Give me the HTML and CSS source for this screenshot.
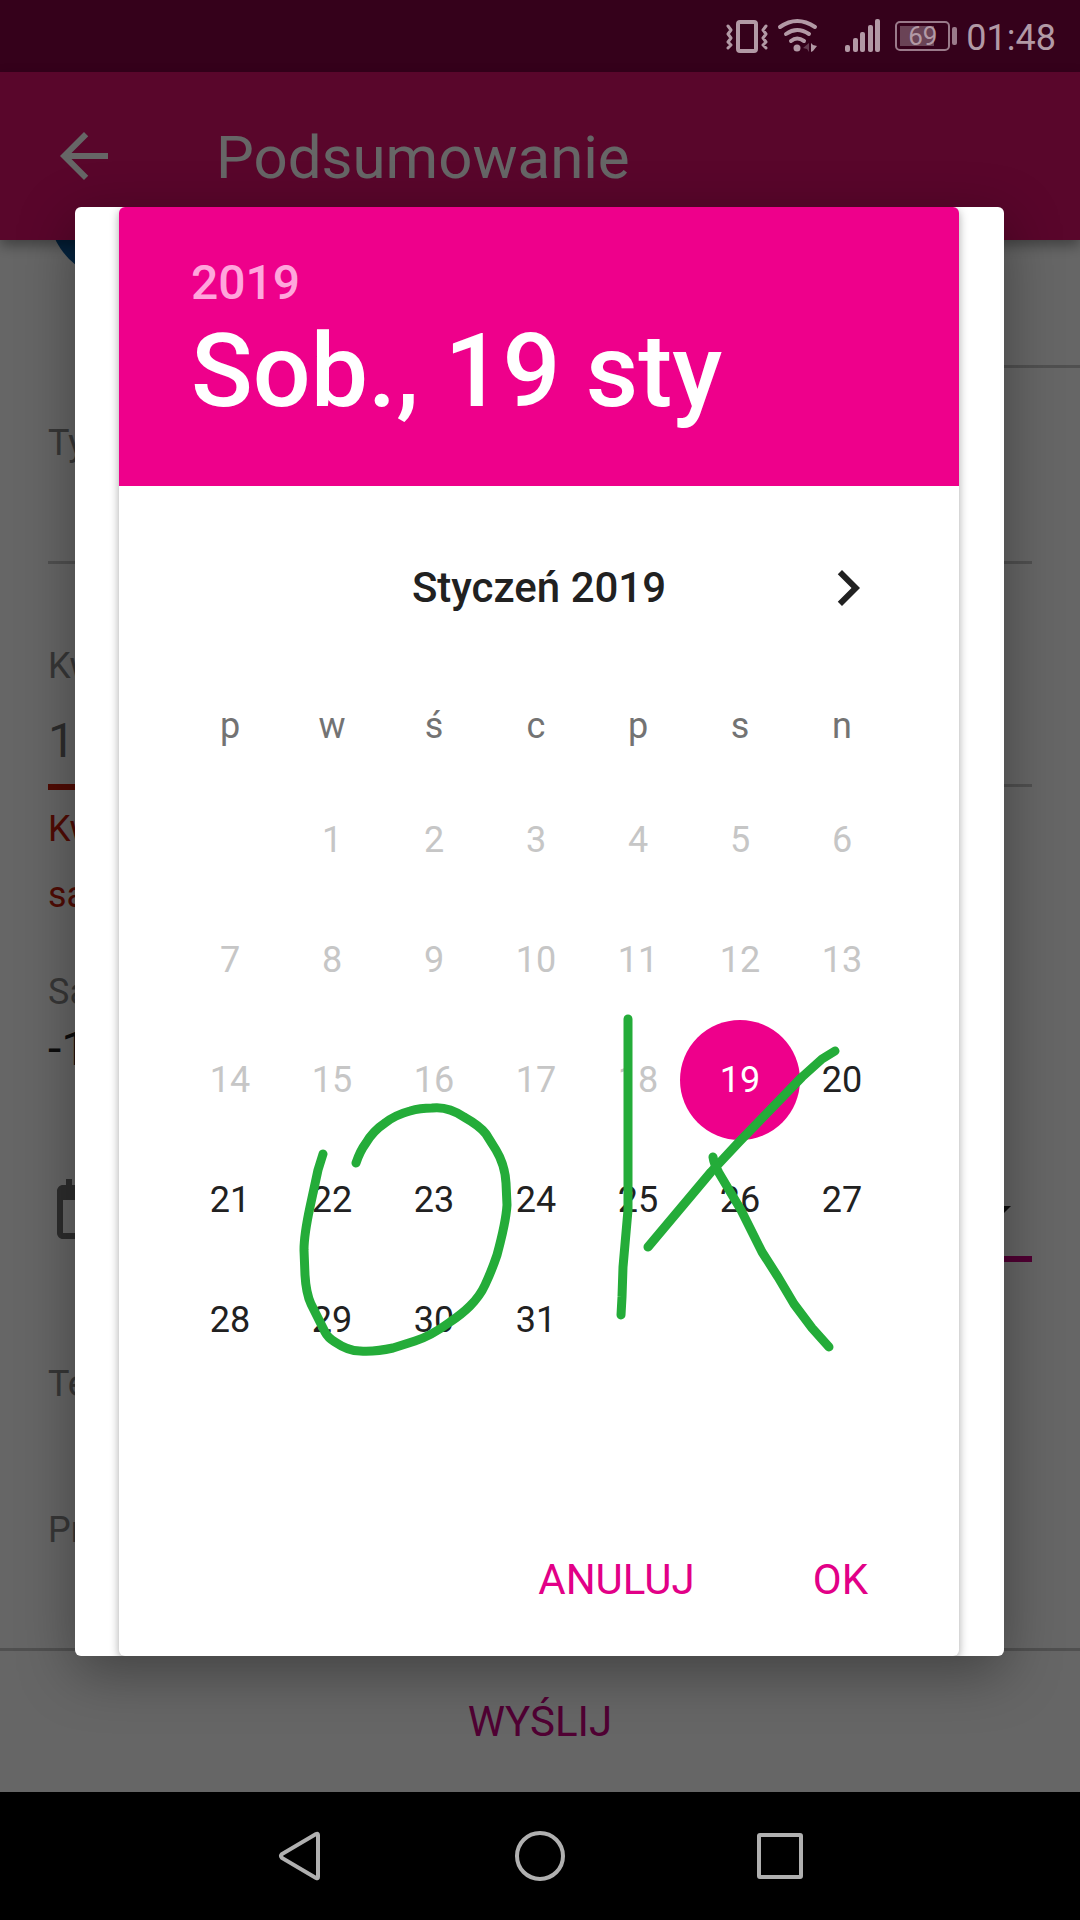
FILE: index.html
```html
<!DOCTYPE html>
<html lang="pl">
<head>
  <meta charset="utf-8">
  <meta name="viewport" content="width=device-width, initial-scale=1">
  <title>Podsumowanie</title>
  <link rel="stylesheet" href="styles.css">
</head>
<body>
  <div class="status-bar">
    <svg class="status-icons" width="156" height="72" viewBox="725 0 156 72" aria-hidden="true">
      <g fill="none" stroke="#b299a5" stroke-width="4" stroke-linejoin="round" stroke-linecap="round">
        <rect x="738" y="22" width="18" height="29" rx="2"/>
        <path stroke-width="3" d="M728 26l3 4-3 4 3 4-3 4 3 3-3 3M766 26l-3 4 3 4-3 4 3 4-3 3 3 3"/>
        <path d="M780 27q17-12 35 0M786 34q11-8 23 0M791 41q6-5 13 0"/>
      </g>
      <g fill="#b299a5">
        <circle cx="797" cy="48" r="3.500"/>
        <path d="M811 43v9l2-1 4-5-4-1z"/>
        <path opacity=".4" d="M803 48l6-5v9l-2-3z"/>
        <rect x="845" y="45" width="5" height="7" rx="2"/>
        <rect x="853" y="38" width="5" height="14" rx="2"/>
        <rect x="860" y="32" width="5" height="20" rx="2"/>
        <rect x="868" y="25" width="5" height="27" rx="2"/>
        <rect x="875" y="19" width="5" height="33" rx="2"/>
      </g>
    </svg>
    <span class="battery"><span class="battery-level">69</span></span>
    <time class="clock">01:48</time>
  </div>

  <main class="screen">
    <header class="app-bar">
      <button class="icon-button" aria-label="Wstecz">
        <svg viewBox="0 0 24 24"><path d="M20 11H7.830l5.590-5.590L12 4l-8 8 8 8 1.410-1.410L7.830 13H20v-2z"/></svg>
      </button>
      <h1 class="app-title">Podsumowanie</h1>
    </header>

    <form class="form">
      <div class="contact"><span class="avatar"></span></div>

      <div class="field field-first">
        <label class="label" for="title">Ty</label>
        <input class="control" id="title">
      </div>

      <div class="field-row">
        <div class="field field-error">
          <label class="label" for="amount">Kw</label>
          <input class="control" id="amount" value="1">
          <p class="error">Kw<br>sa</p>
        </div>
        <div class="field">
          <span class="label"></span>
          <span class="control"></span>
        </div>
      </div>

      <div class="balance">
        <div class="label">Sa</div>
        <div class="balance-value">-1</div>
      </div>

      <div class="date-row">
        <label class="date-icon" for="date" aria-label="Data">
          <svg viewBox="0 0 24 24"><path d="M19 3h-1V1h-2v2H8V1H6v2H5c-1.110 0-2 .9-2 2v14c0 1.100.9 2 2 2h14c1.100 0 2-.9 2-2V5c0-1.100-.9-2-2-2zm0 16H5V8h14v11z"/></svg>
        </label>
        <div class="date-box">
          <select class="date-select" id="date"><option></option></select>
          <svg class="date-arrow" viewBox="0 0 24 24" aria-hidden="true"><path d="M7 10l5 5 5-5z"/></svg>
        </div>
      </div>

      <div class="label section-label">Te</div>
      <div class="label section-label">Pr</div>
    </form>

    <footer class="send-bar"><button class="send">WYŚLIJ</button></footer>

    <div class="scrim">
      <section class="dialog" role="dialog" aria-label="Wybór daty">
        <div class="picker">
          <header class="picker-header">
            <div class="picker-year">2019</div>
            <div class="picker-date">Sob., 19 sty</div>
          </header>
          <div class="month-bar">
            <h2 class="month-title">Styczeń 2019</h2>
            <button class="icon-button month-next" aria-label="Następny miesiąc">
              <svg viewBox="0 0 24 24"><path d="M10 6L8.590 7.410 13.170 12l-4.580 4.590L10 18l6-6z"/></svg>
            </button>
          </div>
          <div class="calendar">
            <table class="days">
              <thead>
                <tr><th>p</th><th>w</th><th>ś</th><th>c</th><th>p</th><th>s</th><th>n</th></tr>
              </thead>
              <tbody>
                <tr class="past"><td></td><td>1</td><td>2</td><td>3</td><td>4</td><td>5</td><td>6</td></tr>
                <tr class="past"><td>7</td><td>8</td><td>9</td><td>10</td><td>11</td><td>12</td><td>13</td></tr>
                <tr class="past"><td>14</td><td>15</td><td>16</td><td>17</td><td>18</td><td class="selected"><span class="selected-day">19</span></td><td class="open">20</td></tr>
                <tr><td>21</td><td>22</td><td>23</td><td>24</td><td>25</td><td>26</td><td>27</td></tr>
                <tr><td>28</td><td>29</td><td>30</td><td>31</td><td></td><td></td><td></td></tr>
              </tbody>
            </table>
            <svg class="scribble" viewBox="179 672 714 708" aria-hidden="true">
              <path d="M323 1154L318 1170 310 1207Q304 1235 304 1250L305 1275Q306 1293 311 1304L325 1332Q328 1338 335 1342 348 1351 360 1351 375 1352 393 1348L415 1341Q431 1336 450 1322 462 1314 470 1306 480 1296 485 1285 492 1270 497 1255 506 1222 507 1205L506 1183Q505 1165 496 1150L486 1134Q480 1126 464 1117 448 1106 432 1108 420 1108 410 1111 395 1115 385 1123 373 1131 366 1143 360 1151 356 1163"/>
              <path d="M628 1019V1210L623 1267 622 1297 621 1315"/>
              <path d="M835 1051L822 1059 802 1077 739 1142 711 1172 690 1197 648 1247"/>
              <path d="M713 1157Q714 1164 719 1173L741 1210 762 1252 778 1277 794 1304 812 1328 829 1347"/>
            </svg>
          </div>
          <div class="actions">
            <button class="action">ANULUJ</button>
            <button class="action">OK</button>
          </div>
        </div>
      </section>
    </div>
  </main>

  <nav class="nav-bar">
    <button class="nav-button" aria-label="Wstecz"><svg viewBox="0 0 72 72"><path d="M54 15v42q0 2-2 1L18 38q-2-2 0-4L52 14q2-1 2 1z"/></svg></button>
    <button class="nav-button" aria-label="Ekran główny"><svg viewBox="0 0 72 72"><circle cx="36" cy="36" r="23"/></svg></button>
    <button class="nav-button" aria-label="Ostatnie"><svg viewBox="0 0 72 72"><rect x="15" y="15" width="42" height="42" rx="1"/></svg></button>
  </nav>
</body>
</html>
```

FILE: styles.css
```css
* {
  box-sizing: border-box;
}

body {
  display: flex;
  flex-direction: column;
  min-height: 100vh;
  margin: 0;
  background: #000;
  color: #212121;
  font-family: Roboto, "Noto Sans", sans-serif;
  font-size: 36px;
}

h1,
h2,
p {
  margin: 0;
  font-weight: 400;
}

button,
input,
select {
  padding: 0;
  border: 0;
  border-radius: 0;
  background: none;
  color: inherit;
  font: inherit;
}

svg {
  display: block;
}

/* Status bar */

.status-bar {
  display: flex;
  align-items: center;
  justify-content: flex-end;
  height: 72px;
  padding-right: 24px;
  background: #35011b;
  color: #b299a5;
}

.battery {
  position: relative;
  width: 55px;
  height: 30px;
  margin: 0 16px 0 14px;
  padding: 3px;
  border: 2px solid #9a7a8a;
  border-radius: 5px;
}

.battery::after {
  content: "";
  position: absolute;
  top: 4px;
  right: -9px;
  width: 5px;
  height: 18px;
  border-radius: 2px;
  background: #9a7a8a;
}

.battery-level {
  display: block;
  height: 20px;
  background: linear-gradient(90deg, #6a4356 75%, transparent 75%);
  font-size: 26px;
  line-height: 20px;
  text-align: center;
}

.clock {
  line-height: 72px;
  padding-top: 3px;
}

/* Screen behind the dialog */

.screen {
  position: relative;
  display: flex;
  flex: 1;
  flex-direction: column;
  background: #fff;
}

.app-bar {
  z-index: 1;
  display: flex;
  align-items: center;
  gap: 96px;
  height: 168px;
  padding: 0 48px;
  background: #de0f6d;
  box-shadow: 0 6px 12px rgba(0, 0, 0, .35);
  color: #fff;
}

.app-title {
  padding-top: 4px;
  font-size: 60px;
  line-height: 72px;
}

.icon-button svg,
.date-icon svg,
.date-arrow {
  width: 72px;
  height: 72px;
  fill: currentColor;
}

.form {
  flex: 1;
  padding: 0 48px;
}

.contact {
  height: 128px;
  margin: 0 -48px 0 168px;
  border-bottom: 3px solid #c8c8c8;
}

.avatar {
  display: block;
  width: 144px;
  height: 144px;
  margin: 0 0 0 -168px;
  border-radius: 50%;
  background: #0c5aa0;
  position: relative;
  top: -104px;
}

.label {
  display: block;
  height: 48px;
  color: #8a8a8a;
  line-height: 48px;
}

.control {
  display: block;
  width: 100%;
  height: 97px;
  padding-top: 6px;
  border-bottom: 3px solid #c8c8c8;
  color: #707070;
  font-size: 48px;
}

.field-first {
  margin-top: 51px;
}

.field-row {
  display: grid;
  grid-template-columns: 1fr 1fr;
  gap: 24px;
  margin-top: 78px;
}

.field-error .control {
  height: 100px;
  border-bottom: 6px solid #c81c0a;
}

.error {
  padding-top: 6px;
  color: #c81c0a;
  line-height: 66px;
}

.balance {
  margin-top: 40px;
}

.balance-value {
  font-size: 48px;
  line-height: 66px;
}

.date-row {
  display: flex;
  gap: 24px;
  margin-top: 94px;
}

.date-icon {
  height: 86px;
  color: #707070;
}

.date-box {
  position: relative;
  flex: 1;
}

.date-select {
  width: 100%;
  height: 86px;
  border-bottom: 6px solid #c8007f;
  appearance: none;
}

.date-arrow {
  position: absolute;
  top: 0;
  right: 0;
}

.section-label {
  margin-top: 98px;
}

.send-bar {
  display: flex;
  justify-content: center;
  border-top: 3px solid #c8c8c8;
}

.send {
  padding: 0 48px;
  color: #c8007f;
  font-size: 42px;
  line-height: 141px;
}

/* Date picker dialog */

.scrim {
  position: absolute;
  inset: 0;
  z-index: 2;
  display: flex;
  align-items: center;
  padding: 0 76px 2px 75px;
  overflow: hidden;
  background: rgba(0, 0, 0, .6);
}

.dialog {
  flex: 1;
  padding: 0 45px 0 44px;
  overflow: hidden;
  border-radius: 6px;
  background: #fff;
  box-shadow: 0 16px 56px rgba(0, 0, 0, .36);
}

.picker {
  overflow: hidden;
  border-radius: 6px;
  background: #fff;
  box-shadow: 0 3px 10px rgba(0, 0, 0, .34);
}

.picker-header {
  padding: 48px 72px 55px;
  background: #ee008b;
  color: #fff;
  font-weight: 500;
}

.picker-year {
  color: #ffa6dc;
  font-size: 48px;
  line-height: 56px;
}

.picker-date {
  font-size: 102px;
  line-height: 120px;
}

.month-bar {
  display: grid;
  grid-template-columns: 72px 1fr 72px;
  padding: 66px 75px 48px;
}

.month-title {
  grid-column: 2;
  font-size: 42px;
  font-weight: 500;
  line-height: 72px;
  text-align: center;
}

.calendar {
  position: relative;
  margin: 0 66px 0 60px;
}

.days {
  width: 100%;
  border-collapse: collapse;
  table-layout: fixed;
}

.days th {
  height: 108px;
  padding: 0;
  color: #737373;
  font-weight: 400;
}

.days td {
  height: 120px;
  padding: 0;
  text-align: center;
}

.days .past {
  color: #c6c6c6;
}

.days .open {
  color: #212121;
}

.days .selected {
  color: #fff;
}

.selected-day {
  display: block;
  height: 120px;
  margin: 0 -9px;
  border-radius: 50%;
  background: #ee008b;
  line-height: 120px;
}

.scribble {
  position: absolute;
  inset: 0;
  width: 100%;
  height: 100%;
  fill: none;
  stroke: #24ac39;
  stroke-linecap: round;
  stroke-linejoin: round;
  stroke-width: 9px;
  pointer-events: none;
}

.actions {
  display: flex;
  justify-content: flex-end;
  gap: 46px;
  padding: 164px 55px 40px;
}

.action {
  padding: 0 36px;
  color: #e20087;
  font-size: 42px;
  line-height: 72px;
}

/* System navigation */

.nav-bar {
  display: flex;
  align-items: center;
  justify-content: center;
  gap: 168px;
  height: 128px;
}

.nav-button svg {
  width: 72px;
  height: 72px;
  fill: none;
  stroke: #b0b0b0;
  stroke-width: 4px;
}
```
